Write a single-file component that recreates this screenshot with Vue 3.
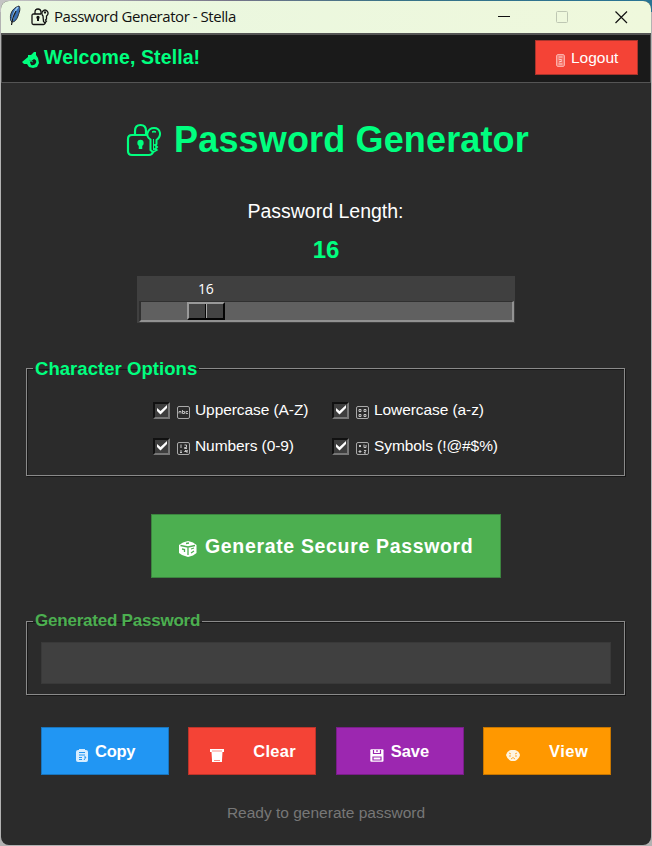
<script setup>
import { ref } from 'vue'

const length = ref(16)
const options = ref([
  { id: 'upper', label: 'Uppercase (A-Z)', checked: true },
  { id: 'lower', label: 'Lowercase (a-z)', checked: true },
  { id: 'numbers', label: 'Numbers (0-9)', checked: true },
  { id: 'symbols', label: 'Symbols (!@#$%)', checked: true },
])
</script>

<template>
  <div class="desktop">
    <div class="window">
      <div class="titlebar">
        <svg class="feather" width="14" height="22" viewBox="0 0 14 22">
          <path d="M3 16C1 10 4 3 11 1C13 4 11 8 10 11C9 14 7 17 4 17Z" fill="#386fb5" stroke="#2b3038" stroke-width="1" />
          <path d="M10 2C6 6 5 11 4 16" fill="none" stroke="#9bcaf0" stroke-width="1.6" />
          <path d="M8 6C5 11 4 15 3.500 20" fill="none" stroke="#1c1c1c" stroke-width="1.200" />
        </svg>
        <svg class="small-lock" width="18" height="18" viewBox="0 0 36 36" fill="none" stroke="#111" stroke-width="2.600">
          <path d="M20 12H5Q2 12 2 15V30Q2 33 5 33H25Q28 33 28 30M8 12V8Q8 2 14 2Q19 2 20 7V12" />
          <path d="M14 19V26" stroke-width="4" /><circle cx="14" cy="19" r="2" fill="#111" />
          <path d="M24 16Q20 12 23 7Q28 1 33 7Q36 12 31 16V22L29 24L31 26L28 30L25 27Z" /><circle cx="28" cy="9" r="1" />
        </svg>
        <span class="caption">Password Generator - Stella</span>
        <svg class="controls" width="132" height="20" viewBox="0 0 132 20" fill="none">
          <path d="M1 9.500H13" stroke="#111" />
          <rect x="59.500" y="4.500" width="11" height="11" rx="1" stroke="#bec7b3" />
          <path d="M118.500 4.500L130 16M130 4.500L118.500 16" stroke="#111" stroke-width="1.200" />
        </svg>
      </div>

      <header class="userbar">
        <svg class="wave" width="18" height="18" viewBox="0 0 18 18">
          <path d="M0 11L6 6L6 4L9 4L12 1L14 1L14 4L16 7L17 12L15 16L11 17L7 16L5 13L2 13Z" fill="#00ff7f" />
          <path d="M8 11L12 8Q15 9 14 12Q12 15 9 14Z" fill="#1a1a1a" />
          <path d="M7 9L11 11" fill="none" stroke="#00c969" />
        </svg>
        <span class="welcome">Welcome, Stella!</span>
        <button class="logout">
          <svg width="9" height="13" viewBox="0 0 9 13">
            <rect x=".7" y=".7" width="7.600" height="11.600" rx="1" fill="#f66c61" stroke="#ffc5c0" />
            <path d="M2.500 3H6.500M2.500 5L6 6M3 8L6 7M2.500 10H6.500" stroke="#ffd4d0" />
          </svg>
          <span>Logout</span>
        </button>
      </header>

      <main>
        <h1>
          <svg width="36" height="36" viewBox="0 0 36 36" fill="none" stroke="#00ff7f" stroke-width="2.200">
            <path d="M21 12H6Q2 12 2 16V28Q2 32 6 32H23Q26 32 27 29M9 12V8Q9 2 14.500 2Q20 2 20 8V12" />
            <path d="M14.500 20V26" stroke-width="3.500" /><circle cx="14.500" cy="20" r="2.400" fill="#00ff7f" stroke-width="1.500" />
            <path d="M24.500 16.500Q20.500 14 21.500 10Q23 5 28 5Q33 5 34 10Q34.500 14 30.500 17V21L29 22L31 24L29 26L30.500 27L27 29L24.500 27Z" stroke-width="2" />
            <path d="M26 9Q28 7 30 9Z" fill="#00ff7f" stroke-width="1" /><path d="M27.500 16V27" stroke-width="1" />
          </svg>
          <span>Password Generator</span>
        </h1>
        <div class="length-label"><span>Password Length:</span></div>
        <div class="length-value">{{ length }}</div>
        <div class="scale">
          <div class="scale-value">{{ length }}</div>
          <div class="trough"><div class="thumb"><i></i><i></i></div></div>
        </div>

        <fieldset class="options">
          <legend><span>Character Options</span></legend>
          <div class="option-grid">
            <label v-for="item in options" :key="item.id" :class="['option', item.id]">
              <span class="checkbox">
                <svg v-if="item.checked" width="10" height="10" viewBox="0 0 10 10">
                  <path d="M0 3L3.500 6L10 0V3L3.500 9.500L0 6Z" fill="#fff" />
                </svg>
              </span>
              <svg class="keycap" width="13" height="13" viewBox="0 0 13 13" fill="none" stroke="#c6c6c6">
                <rect x=".5" y=".5" width="12" height="12" rx="1.500" stroke="#a9a9a9" />
                <path v-if="item.id === 'upper'" d="M2 7.500V5.500H4V7.500M5.500 4V7.500H7.500V5.500H5.500M11 5.500H9V7.500H11" stroke-width=".9" />
                <path v-else-if="item.id === 'numbers'" d="M4 2.500V6M3 10.500H5M4 8V10.500M7.500 3H9.500V5.500H7.500V6.500H10M9 8L7.500 9.500H10V8V11" />
                <path v-else-if="item.id === 'lower'" d="M3 3.500H5V5.500H3ZM8 3.500H10V5.500H8ZM3 8.500H5V10.500H3ZM8 8.500H10V10.500H8Z" />
                <path v-else d="M3 3L5 5M5 3L3 5M8 2.500V5.500H10V3M4 8V11M2.500 9.500H5.500M8 8.500H10L8 11H10" />
              </svg>
              <span class="option-text">{{ item.label }}</span>
            </label>
          </div>
        </fieldset>

        <button class="generate">
          <svg width="18" height="16" viewBox="0 0 18 16">
            <path d="M0 4L4 1.500L9 0L14 1.500L17.500 4V12L14 14.500L9 16L3 14L0 12Z" fill="#fff" />
            <path d="M1.500 4.500L9 6L16 4.500M9 6V14M3 8L5.500 8.500V11M12 8L15 7M12 12L15 10M7 2.500L10 2" fill="none" stroke="#4caf50" stroke-width="1.300" />
          </svg>
          <span>Generate Secure Password</span>
        </button>

        <fieldset class="result">
          <legend><span>Generated Password</span></legend>
          <input type="text" readonly />
        </fieldset>

        <div class="actions">
          <button class="copy">
            <svg width="12" height="13" viewBox="0 0 12 13"><rect y="1" width="12" height="12" rx="2" fill="#d7edff" /><rect x="3" width="6" height="2" fill="#d7edff" /><path d="M3 3.500H9M3 6H9M3 8.500H6M3 10.500H6M8 8H10L8 11" stroke="#2196f3" fill="none" /></svg>
            <span>Copy</span>
          </button>
          <button class="clear">
            <svg width="14" height="13" viewBox="0 0 14 13"><path d="M0 0H14V3H12.500L12 11V13H2V11L1.500 3H0Z" fill="#fff" /><path d="M2 2H12M4 11.500H10" stroke="#f44336" stroke-width=".6" /></svg>
            <span>Clear</span>
          </button>
          <button class="save">
            <svg width="14" height="13" viewBox="0 0 14 13"><rect x=".3" y=".3" width="13.200" height="12.400" rx="1" fill="#fff" /><path d="M3.500 1V4.500H10.500V1M7 1V3M3 11V8H11V11Z" fill="none" stroke="#9c27b0" stroke-width="1.200" /></svg>
            <span>Save</span>
          </button>
          <button class="view">
            <svg width="14" height="11" viewBox="0 0 14 11"><path d="M0 5Q1 1 5 0H9Q13 1 14 5Q13 9 9 11H5Q1 9 0 5Z" fill="#fff4df" /><path d="M3 3L5 4M11 3L9 4M3 6H5M9 6H11M5 9Q7 6 9 9" fill="none" stroke="#ffab35" /></svg>
            <span>View</span>
          </button>
        </div>
        <div class="status"><span>Ready to generate password</span></div>
      </main>
    </div>
  </div>
</template>

<style>
body { margin: 0; overflow: hidden; }
</style>

<style scoped>
* { box-sizing: border-box; }
.desktop { width: 652px; height: 846px; padding: 1px; background: linear-gradient(90deg, #c4c4c4 0%, #777589 35%, #397387 60%, #287494 100%) top / 100% 12px no-repeat, #b2b2b2; }
.window { width: 650px; height: 844px; border-radius: 8px; overflow: hidden; background: #2b2b2b; color: #fff; font-family: "Liberation Sans", Arial, sans-serif; display: flex; flex-direction: column; }
span { white-space: nowrap; }
svg { display: block; flex: none; }
button { border: 0; border-radius: 0; font: inherit; color: #fff; display: flex; }
.titlebar { height: 32px; flex: none; display: flex; align-items: center; background: linear-gradient(90deg, #e9f7e0, #eff8dc); color: #111; }
.feather { margin-left: 7px; margin-top: -2px; }
.small-lock { margin-left: 9px; margin-top: -1px; }
.caption { margin: -2px 0 0 5px; width: 200px; font: 15px/20px "Open Sans", sans-serif; letter-spacing: -.45px; }
.controls { margin-left: 243px; }
.userbar { height: 50px; flex: none; display: flex; border: 1px solid #555; border-top-width: 2px; background: #1a1a1a; }
.wave { margin: 16px 0 0 20px; }
.welcome { width: 180px; margin-left: 4px; font-size: 19.500px; line-height: 22px; margin-top: 11px; font-weight: 700; letter-spacing: .1px; color: #00ff7f; }
.logout { width: 103px; height: 35px; margin: 5px 12px 0 auto; padding: 14px 0 0 21px; background: #f44336; outline: 1px solid #a9342c; outline-offset: -1px; font-size: 15.500px; }
.logout span { margin: -5px 0 0 6px; line-height: 18px; }
main { flex: 1; display: flex; flex-direction: column; align-items: center; }
h1 { margin: 36px 0 0 3px; display: flex; height: 42px; font-size: 36px; line-height: 42px; color: #00ff7f; }
h1 svg { margin-top: 4px; }
h1 span { margin-left: 12px; letter-spacing: .15px; }
.length-label { margin-top: 38px; height: 24px; margin-left: -1px; font-size: 19.500px; line-height: 24px; }
.length-value { margin-top: 13px; height: 28px; font-size: 24px; line-height: 28px; font-weight: 700; color: #00ff7f; }
.scale { width: 378px; height: 47px; margin-top: 12px; padding: 0 1px 1px 2px; background: #404040; }
.scale-value { height: 25px; margin-left: 59px; padding-top: 4px; font: 14px/17px "Open Sans", sans-serif; letter-spacing: -.2px; }
.trough { height: 21px; padding: 0 0 0 48px; background: #606060; border: 1px solid #303030; border-right: 2px solid #929292; border-bottom: 2px solid #929292; border-left-width: 2px; }
.thumb { width: 38px; height: 18px; margin-left: -2px; display: flex; border: 2px solid #999; border-right: 2px solid #050505; border-bottom: 2px solid #050505; background: #444; }
.thumb i:first-child { width: 17px; border-right: 1px solid #050505; }
.thumb i:last-child { flex: 1; border-left: 1px solid #aaa; }
fieldset { width: 599px; min-width: 0; margin: 0 1px 0 0; border: 1px solid #8a8a8a; box-shadow: 1px 1px #171717, inset 1px 1px #171717; padding: 0; }
legend { height: 22px; margin-left: 6px; padding: 0 2px; line-height: 22px; font-weight: 700; }
.options { height: 118px; margin-top: 35px; }
.options legend { height: 21px; font-size: 18.500px; letter-spacing: .05px; }
.options legend { color: #00ff7f; }
.option-grid { display: grid; grid-template-columns: 179px 168px; grid-template-rows: 36px 36px; margin: 13px 0 0 126px; }
.option { display: flex; align-items: center; }
.checkbox { width: 17px; height: 17px; border: 2px solid #111; border-right-color: #777; border-bottom-color: #777; background: #3e3e3e; display: grid; place-items: center; }
.keycap { margin: 4px 0 0 7px; }
.option-text { margin-left: 5px; font-size: 15.500px; line-height: 18px; letter-spacing: -.08px; }
.generate { width: 350px; height: 64px; margin-top: 38px; padding: 21px 0 0 28px; background: #4caf50; outline: 1px solid #3c853f; outline-offset: -1px; font-size: 19.500px; font-weight: 700; }
.generate svg { margin-top: 6px; }
.generate span { margin-left: 8px; line-height: 22px; letter-spacing: .66px; }
.result { height: 85px; margin-top: 32px; }
.result legend { height: 22px; font-size: 17px; letter-spacing: -.22px; color: #4caf50; }
.result input { display: block; width: 570px; height: 42px; margin: 10px auto 0 14px; padding: 0; border: 1px solid #393939; outline: 0; background: #404040; }
.actions { width: 570px; margin-top: 32px; display: grid; grid-template-columns: 128px 128px 128px 128px; justify-content: space-between; }
.actions button { height: 48px; padding: 15px 0 0; font-size: 16.500px; line-height: 18px; font-weight: 700; outline: 1px solid rgba(0, 0, 0, .22); outline-offset: -1px; }
.actions svg { margin-top: 7px; }
.copy { background: #2196f3; }
.copy svg { margin-left: 35px; } .copy span { margin-left: 7px; letter-spacing: -.25px; }
.clear { background: #f44336; }
.clear svg { margin-left: 22px; } .clear span { margin-left: 29px; letter-spacing: .25px; }
.save { background: #9c27b0; }
.save svg { margin-left: 34px; } .save span { margin-left: 7px; }
.view { background: #ff9800; }
.view svg { margin: 8px 0 0 23px; } .view span { margin-left: 29px; letter-spacing: .5px; }
.status { margin-top: 28px; font-size: 15.500px; line-height: 20px; color: #777; }
</style>
